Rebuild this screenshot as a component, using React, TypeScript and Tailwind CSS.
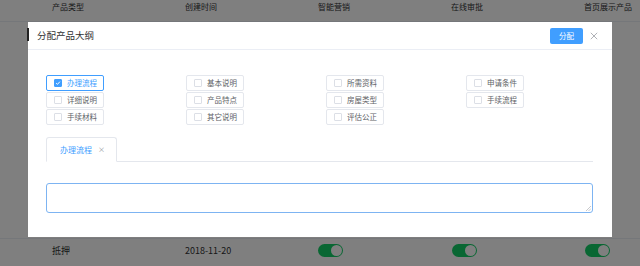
import React from 'react';

const font = { fontFamily: '"Noto Sans CJK SC", "Noto Sans", sans-serif' };

const columns = [
  [{ label: '办理流程', checked: true }, { label: '详细说明' }, { label: '手续材料' }],
  [{ label: '基本说明' }, { label: '产品特点' }, { label: '其它说明' }],
  [{ label: '所需资料' }, { label: '房屋类型' }, { label: '评估公正' }],
  [{ label: '申请条件' }, { label: '手续流程' }],
];

const headers = ['产品类型', '创建时间', '智能营销', '在线审批', '首页展示产品'];

function Toggle() {
  return (
    <div className="w-[25px] h-[13px] rounded-full bg-[#13ce66] relative">
      <div className="absolute right-[1px] top-[1px] w-[11px] h-[11px] rounded-full bg-white" />
    </div>
  );
}

function CheckItem({ label, checked }: { label: string; checked?: boolean }) {
  return (
    <div className={`w-[58px] h-[16px] flex items-center pl-[7px] gap-[5px] rounded-[2px] border ${checked ? 'border-[#409eff]' : 'border-[#e4e7ed]'}`}>
      <span className={`w-[8px] h-[8px] rounded-[1px] border flex items-center justify-center ${checked ? 'bg-[#409eff] border-[#409eff]' : 'bg-white border-[#dcdfe6]'}`}>
        {checked && (
          <svg viewBox="0 0 8 8" className="w-[6px] h-[6px]">
            <path d="M1.5 4.2 L3.3 5.8 L6.5 2.2" fill="none" stroke="white" strokeWidth="1.3" />
          </svg>
        )}
      </span>
      <span className={`text-[7.5px] leading-none ${checked ? 'text-[#409eff]' : 'text-[#606266]'}`}>{label}</span>
    </div>
  );
}

export default function App() {
  return (
    <div className="relative w-[640px] h-[266px] bg-white overflow-hidden" style={font}>
      {/* Table behind */}
      <div className="flex flex-col h-full">
        <div className="flex h-[22px] items-start pt-[1px] pl-[52px] border-b border-[#ebeef5] text-[8px] text-[#303133]">
          {headers.map((h) => (
            <div key={h} className="w-[133px] shrink-0">{h}</div>
          ))}
        </div>
        <div className="flex-1" />
        <div className="flex h-[28px] items-center pl-[52px] pb-[4px] text-[9px] text-[#303133] border-t border-[#ebeef5]">
          <div className="w-[133px] shrink-0">抵押</div>
          <div className="w-[133px] shrink-0">2018-11-20</div>
          <div className="w-[134px] shrink-0"><Toggle /></div>
          <div className="w-[133px] shrink-0"><Toggle /></div>
          <div className="w-[133px] shrink-0"><Toggle /></div>
        </div>
      </div>

      {/* Overlay */}
      <div className="absolute inset-0 bg-black/50" />

      {/* Dialog */}
      <div className="absolute left-[28px] top-[22px] w-[584px] h-[215px] bg-white">
        <div className="relative h-[28px] flex items-center border-b border-[#ebeef5] pl-[9px] pr-[14px]">
          <div className="absolute -left-[1px] top-[6px] w-[2px] h-[13px] bg-[#222]" />
          <span className="text-[9.5px] text-[#303133]">分配产品大纲</span>
          <div className="ml-auto flex items-center gap-[7px]">
            <button className="w-[33px] h-[16px] bg-[#409eff] text-white text-[7.5px] rounded-[2px] flex items-center justify-center">分配</button>
            <svg viewBox="0 0 10 10" className="w-[8px] h-[8px]">
              <path d="M1 1 L9 9 M9 1 L1 9" stroke="#909399" strokeWidth="0.9" />
            </svg>
          </div>
        </div>

        <div className="pl-[18px] pr-[19px] pt-[25px]">
          <div className="flex">
            {columns.map((col, i) => (
              <div key={i} className="w-[140px] shrink-0 flex flex-col gap-[1px]">
                {col.map((it) => (
                  <CheckItem key={it.label} label={it.label} checked={it.checked} />
                ))}
              </div>
            ))}
          </div>

          <div className="mt-[12px] flex border-b border-[#e4e7ed]">
            <div className="w-[71px] h-[25px] -mb-[1px] border border-[#e4e7ed] border-b-white rounded-t-[3px] flex items-center pl-[13px] gap-[6px] bg-white">
              <span className="text-[8px] text-[#409eff]">办理流程</span>
              <span className="text-[7px] text-[#909399]">×</span>
            </div>
          </div>

          <div className="mt-[21px] relative h-[30px] border border-[#7db4f2] rounded-[3px]">
            <svg viewBox="0 0 6 6" className="absolute right-[1px] bottom-[1px] w-[5px] h-[5px]">
              <path d="M0 6 L6 0 M3 6 L6 3" stroke="#909399" strokeWidth="0.6" />
            </svg>
          </div>
        </div>
      </div>
    </div>
  );
}
